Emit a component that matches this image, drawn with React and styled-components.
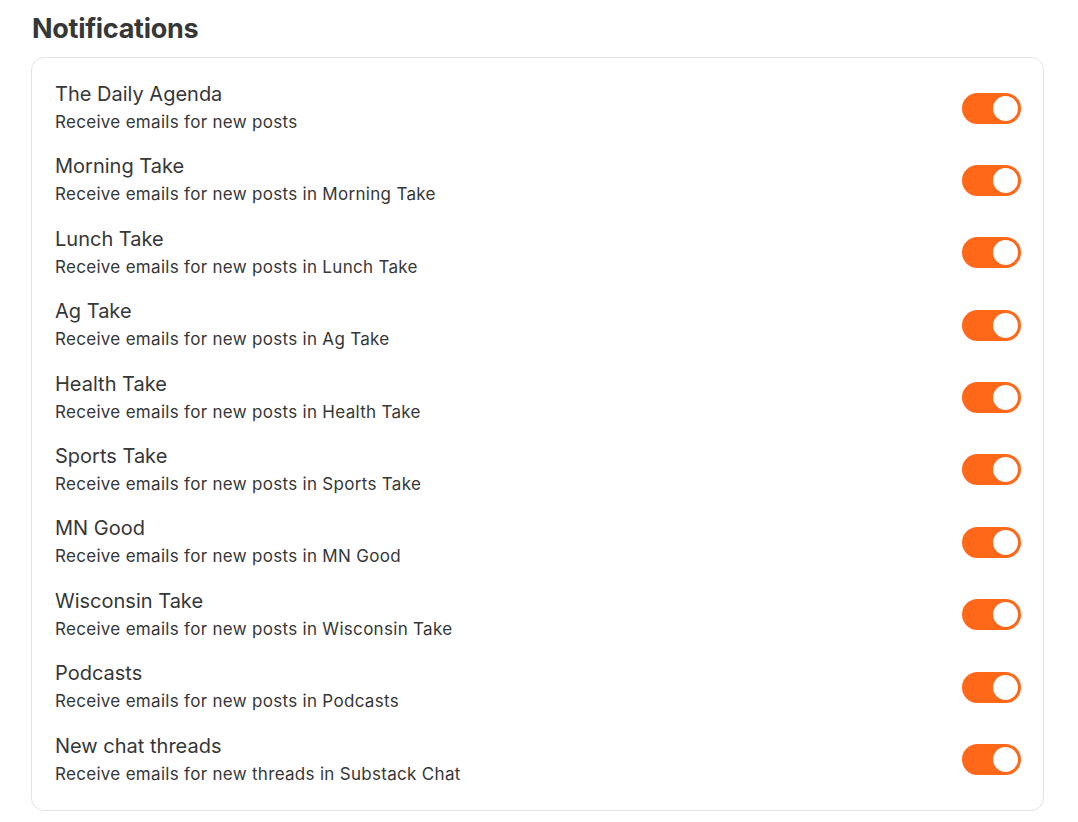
import React, { useState } from "react";
import styled, { createGlobalStyle } from "styled-components";

const GlobalStyle = createGlobalStyle`
  body {
    margin: 0;
    background: #ffffff;
    font-family: Inter, "Noto Sans", sans-serif;
    color: #363737;
  }
`;

const Page = styled.div`
  padding: 12px 34px 12px 31px;
`;

const Heading = styled.h2`
  margin: 0 0 11px 1px;
  font-size: 27px;
  line-height: 34px;
  font-weight: 700;
  letter-spacing: -0.3px;
  color: #363737;
`;

const Card = styled.div`
  border: 1px solid #e3e3e3;
  border-radius: 13px;
  padding: 22px 22px 22px 23px;
  display: flex;
  flex-direction: column;
  gap: 16.4px;
`;

const Row = styled.div`
  display: flex;
  align-items: center;
  justify-content: space-between;
`;

const Texts = styled.div`
  display: flex;
  flex-direction: column;
`;

const Title = styled.div`
  font-size: 20px;
  line-height: 28px;
  color: #363737;
`;

const Sub = styled.div`
  font-size: 17px;
  line-height: 28px;
  letter-spacing: 0.3px;
  color: #363737;
`;

const Switch = styled.button`
  width: 59px;
  height: 31px;
  border: none;
  padding: 3px;
  border-radius: 16px;
  background: ${(p) => (p.$on ? "#ff6719" : "#d9d9d9")};
  display: flex;
  justify-content: ${(p) => (p.$on ? "flex-end" : "flex-start")};
  cursor: pointer;
  flex-shrink: 0;
`;

const Knob = styled.span`
  width: 25px;
  height: 25px;
  border-radius: 50%;
  background: #ffffff;
`;

const items = [
  ["The Daily Agenda", "Receive emails for new posts"],
  ["Morning Take", "Receive emails for new posts in Morning Take"],
  ["Lunch Take", "Receive emails for new posts in Lunch Take"],
  ["Ag Take", "Receive emails for new posts in Ag Take"],
  ["Health Take", "Receive emails for new posts in Health Take"],
  ["Sports Take", "Receive emails for new posts in Sports Take"],
  ["MN Good", "Receive emails for new posts in MN Good"],
  ["Wisconsin Take", "Receive emails for new posts in Wisconsin Take"],
  ["Podcasts", "Receive emails for new posts in Podcasts"],
  ["New chat threads", "Receive emails for new threads in Substack Chat"],
];

export default function App() {
  const [on, setOn] = useState(items.map(() => true));
  const toggle = (i) => setOn((pre) => pre.map((v, j) => (j === i ? !v : v)));

  return (
    <>
      <GlobalStyle />
      <Page>
        <Heading>Notifications</Heading>
        <Card>
          {items.map(([title, sub], i) => (
            <Row key={title}>
              <Texts>
                <Title>{title}</Title>
                <Sub>{sub}</Sub>
              </Texts>
              <Switch $on={on[i]} onClick={() => toggle(i)}>
                <Knob />
              </Switch>
            </Row>
          ))}
        </Card>
      </Page>
    </>
  );
}
